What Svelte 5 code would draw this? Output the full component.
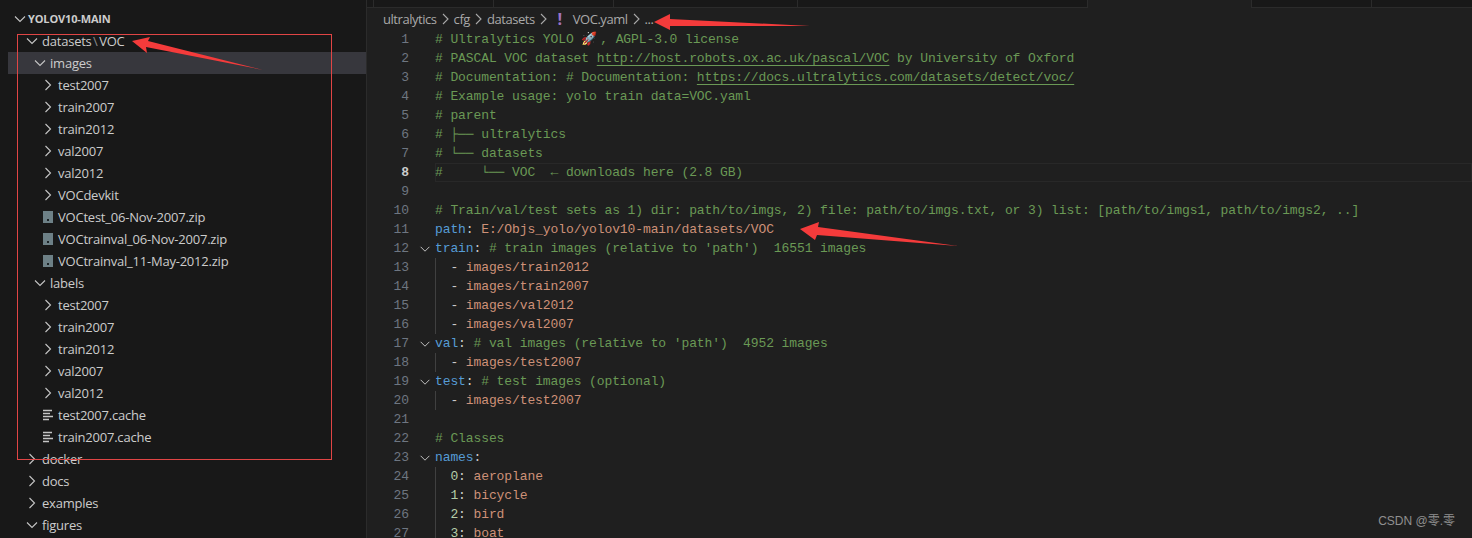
<script>
  const tree = [
    { d: 1, k: 'open', t: 'datasets', sep: 'VOC' },
    { d: 2, k: 'open', t: 'images', sel: true },
    { d: 3, k: 'closed', t: 'test2007' },
    { d: 3, k: 'closed', t: 'train2007' },
    { d: 3, k: 'closed', t: 'train2012' },
    { d: 3, k: 'closed', t: 'val2007' },
    { d: 3, k: 'closed', t: 'val2012' },
    { d: 3, k: 'closed', t: 'VOCdevkit' },
    { d: 3, k: 'zip', t: 'VOCtest_06-Nov-2007.zip' },
    { d: 3, k: 'zip', t: 'VOCtrainval_06-Nov-2007.zip' },
    { d: 3, k: 'zip', t: 'VOCtrainval_11-May-2012.zip' },
    { d: 2, k: 'open', t: 'labels' },
    { d: 3, k: 'closed', t: 'test2007' },
    { d: 3, k: 'closed', t: 'train2007' },
    { d: 3, k: 'closed', t: 'train2012' },
    { d: 3, k: 'closed', t: 'val2007' },
    { d: 3, k: 'closed', t: 'val2012' },
    { d: 3, k: 'lines', t: 'test2007.cache' },
    { d: 3, k: 'lines', t: 'train2007.cache' },
    { d: 1, k: 'closed', t: 'docker' },
    { d: 1, k: 'closed', t: 'docs' },
    { d: 1, k: 'closed', t: 'examples' },
    { d: 1, k: 'open', t: 'figures' }
  ];

  const c = 'c', k = 'k', s = 's', n = 'n', u = 'u', p = 'p';
  const code = [
    { parts: [[c, '# Ultralytics YOLO '], ['e', '🚀'], [c, ', AGPL-3.0 license']] },
    { parts: [[c, '# PASCAL VOC dataset '], [u, 'http://host.robots.ox.ac.uk/pascal/VOC'], [c, ' by University of Oxford']] },
    { parts: [[c, '# Documentation: # Documentation: '], [u, 'https://docs.ultralytics.com/datasets/detect/voc/']] },
    { parts: [[c, '# Example usage: yolo train data=VOC.yaml']] },
    { parts: [[c, '# parent']] },
    { parts: [[c, '# ├── ultralytics']] },
    { parts: [[c, '# └── datasets']] },
    { parts: [[c, '#     └── VOC  ← downloads here (2.8 GB)']], current: true },
    { parts: [] },
    { parts: [[c, '# Train/val/test sets as 1) dir: path/to/imgs, 2) file: path/to/imgs.txt, or 3) list: [path/to/imgs1, path/to/imgs2, ..]']] },
    { parts: [[k, 'path'], [p, ': '], [s, 'E:/Objs_yolo/yolov10-main/datasets/VOC']] },
    { parts: [[k, 'train'], [p, ': '], [c, "# train images (relative to 'path')  16551 images"]], fold: true },
    { parts: [[p, '  - '], [s, 'images/train2012']], guide: true },
    { parts: [[p, '  - '], [s, 'images/train2007']], guide: true },
    { parts: [[p, '  - '], [s, 'images/val2012']], guide: true },
    { parts: [[p, '  - '], [s, 'images/val2007']], guide: true },
    { parts: [[k, 'val'], [p, ': '], [c, "# val images (relative to 'path')  4952 images"]], fold: true },
    { parts: [[p, '  - '], [s, 'images/test2007']], guide: true },
    { parts: [[k, 'test'], [p, ': '], [c, '# test images (optional)']], fold: true },
    { parts: [[p, '  - '], [s, 'images/test2007']], guide: true },
    { parts: [] },
    { parts: [[c, '# Classes']] },
    { parts: [[k, 'names'], [p, ':']], fold: true },
    { parts: [[p, '  '], [n, '0'], [p, ': '], [s, 'aeroplane']], guide: true },
    { parts: [[p, '  '], [n, '1'], [p, ': '], [s, 'bicycle']], guide: true },
    { parts: [[p, '  '], [n, '2'], [p, ': '], [s, 'bird']], guide: true },
    { parts: [[p, '  '], [n, '3'], [p, ': '], [s, 'boat']], guide: true }
  ];

  const crumbs = ['ultralytics', 'cfg', 'datasets'];
  const tabs = [
    { w: 7 }, { w: 120 }, { w: 120 }, { w: 184 }, { w: 290 }, { w: 164, active: true }, { w: 120 }, { w: 101 }
  ];
</script>

<div class="app">
  <aside class="side">
    <div class="title">
      <svg class="chev" viewBox="0 0 16 16"><path d="M3 5.5l5 5 5-5" /></svg>
      <span>YOLOV10-MAIN</span>
    </div>
    <div class="tree">
      {#each tree as r}
        <div class="row d{r.d}" class:sel={r.sel}>
          {#if r.k === 'open'}
            <svg class="chev" viewBox="0 0 16 16"><path d="M3 5.5l5 5 5-5" /></svg>
          {:else if r.k === 'closed'}
            <svg class="chev" viewBox="0 0 16 16"><path d="M5.5 3l5 5-5 5" /></svg>
          {:else if r.k === 'zip'}
            <svg class="chev" viewBox="0 0 16 16"><rect x="3" y="2" width="10" height="12" fill="#6d8086" /><rect x="7" y="10" width="2" height="2" fill="#1b2225" /></svg>
          {:else}
            <svg class="chev" viewBox="0 0 16 16"><path class="ln" d="M3 3.5h9M3 6.5h7M3 9.5h10M3 12.5h6" /></svg>
          {/if}
          <span class="label">{r.t}{#if r.sep}<span class="sep">\</span>{r.sep}{/if}</span>
        </div>
      {/each}
    </div>
  </aside>

  <main class="main">
    <div class="tabs">
      {#each tabs as t}
        <div class="tab" class:active={t.active} style="width:{t.w}px"></div>
      {/each}
    </div>
    <div class="crumbs">
      {#each crumbs as b}
        <span>{b}</span>
        <svg class="bc" viewBox="0 0 16 16"><path d="M5.5 3l5 5-5 5" /></svg>
      {/each}
      <span class="yaml">!</span>
      <span>VOC.yaml</span>
      <svg class="bc" viewBox="0 0 16 16"><path d="M5.5 3l5 5-5 5" /></svg>
      <span>...</span>
    </div>
    <div class="code">
      {#each code as line, i}
        <div class="line" class:current={line.current}>
          <span class="num">{i + 1}</span>
          <span class="fold">
            {#if line.fold}
              <svg class="chev" viewBox="0 0 16 16"><path d="M3 5.5l5 5 5-5" /></svg>
            {/if}
          </span>
          <span class="txt" class:guide={line.guide}>{#each line.parts as part}<span class={part[0]}>{part[1]}</span>{/each}</span>
        </div>
      {/each}
    </div>
  </main>

  <div class="frame"></div>
  <svg class="arrows" viewBox="0 0 1472 538">
    <path d="M132 41 L150 37 L148 41 L263 70 L146 47 L147 53 Z" />
    <path d="M654 22 L670 14 L670 19 L810 26 L670 26 L670 30 Z" />
    <path d="M800 229 L819 222 L818 227 L958 246 L817 235 L815 240 Z" />
  </svg>
  <div class="mark">CSDN @零.零</div>
</div>

<style>
  :global(body) { margin: 0; background: #1f1f1f; }
  .app {
    position: relative;
    display: flex;
    width: 1472px;
    height: 538px;
    overflow: hidden;
    background: #1f1f1f;
  }
  .side {
    flex: none;
    box-sizing: border-box;
    width: 367px;
    height: 538px;
    padding-top: 8px;
    background: #181818;
    border-right: 1px solid #2b2b2b;
    color: #cccccc;
    font: 13px/22px "Open Sans", "Noto Sans", sans-serif;
    overflow: hidden;
  }
  .title {
    display: flex;
    align-items: center;
    height: 22px;
    padding-left: 12px;
    font-size: 11px;
    font-weight: 700;
    letter-spacing: -0.15px;
  }
  .chev { flex: none; width: 16px; height: 16px; }
  .chev path { fill: none; stroke: #c5c5c5; stroke-width: 1.1; }
  .chev .ln { stroke-width: 1.3; }
  .row {
    display: flex;
    align-items: center;
    height: 22px;
    gap: 2px;
    white-space: nowrap;
    letter-spacing: -0.22px;
  }
  .d1 { padding-left: 24px; }
  .d2 { padding-left: 32px; }
  .d3 { padding-left: 40px; }
  .row.sel { margin-left: 8px; background: #37373d; }
  .row.sel.d2 { padding-left: 24px; }
  .label { color: #cccccc; }
  .sep { margin: 0 1.5px; color: #8a8a8a; }

  .main { flex: 1; min-width: 0; }
  .tabs { display: flex; height: 8px; background: #181818; border-bottom: 1px solid #2b2b2b; box-sizing: border-box; }
  .tab { flex: none; box-sizing: border-box; border-right: 1px solid #2b2b2b; }
  .tab.active { background: #1f1f1f; height: 8px; }

  .crumbs {
    display: flex;
    align-items: center;
    height: 22px;
    padding-left: 16px;
    color: #a9a9a9;
    font: 13px/22px "Open Sans", "Noto Sans", sans-serif;
    letter-spacing: -0.45px;
    white-space: nowrap;
  }
  .bc { flex: none; width: 17px; height: 16px; }
  .bc path { fill: none; stroke: #a9a9a9; stroke-width: 1.1; }
  .yaml { width: 16px; margin: 0 5px 0 0; color: #a074c4; font-weight: 700; font-size: 16px; text-align: center; }

  .code {
    margin-top: 0;
    font: 13px/19px "Liberation Mono", monospace;
    letter-spacing: -0.1px;
  }
  .line { display: flex; height: 19px; white-space: pre; }
  .num {
    flex: none;
    width: 42px;
    text-align: right;
    color: #6e7681;
  }
  .line.current .num { color: #cccccc; font-weight: 700; }
  .fold { flex: none; display: flex; align-items: center; justify-content: center; width: 26px; box-sizing: border-box; padding-left: 5px; }
  .fold .chev { width: 14px; height: 14px; }
  .txt { position: relative; flex: 1; box-sizing: border-box; }
  .line.current .txt { box-shadow: inset 0 0 0 1px #282828; }
  .guide::before {
    content: "";
    position: absolute;
    left: 0;
    top: 0;
    bottom: 0;
    border-left: 1px solid #404040;
  }
  .c { color: #6a9955; }
  .u { color: #6a9955; text-decoration: underline; text-underline-offset: 3px; }
  .k { color: #569cd6; }
  .s { color: #ce9178; }
  .n { color: #b5cea8; }
  .p { color: #cccccc; }
  .e { font-family: "Noto Sans", sans-serif; line-height: 0; margin-right: 3px; }

  .frame {
    position: absolute;
    left: 17px;
    top: 34px;
    width: 313px;
    height: 424px;
    border: 1px solid #e04545;
    pointer-events: none;
  }
  .arrows { position: absolute; inset: 0; width: 1472px; height: 538px; pointer-events: none; }
  .arrows path { fill: #f43b3b; }
  .mark {
    position: absolute;
    right: 17px;
    bottom: 9px;
    color: #8f8f8f;
    font: 12px/16px "Liberation Sans", "Noto Sans CJK SC", sans-serif;
  }
</style>
